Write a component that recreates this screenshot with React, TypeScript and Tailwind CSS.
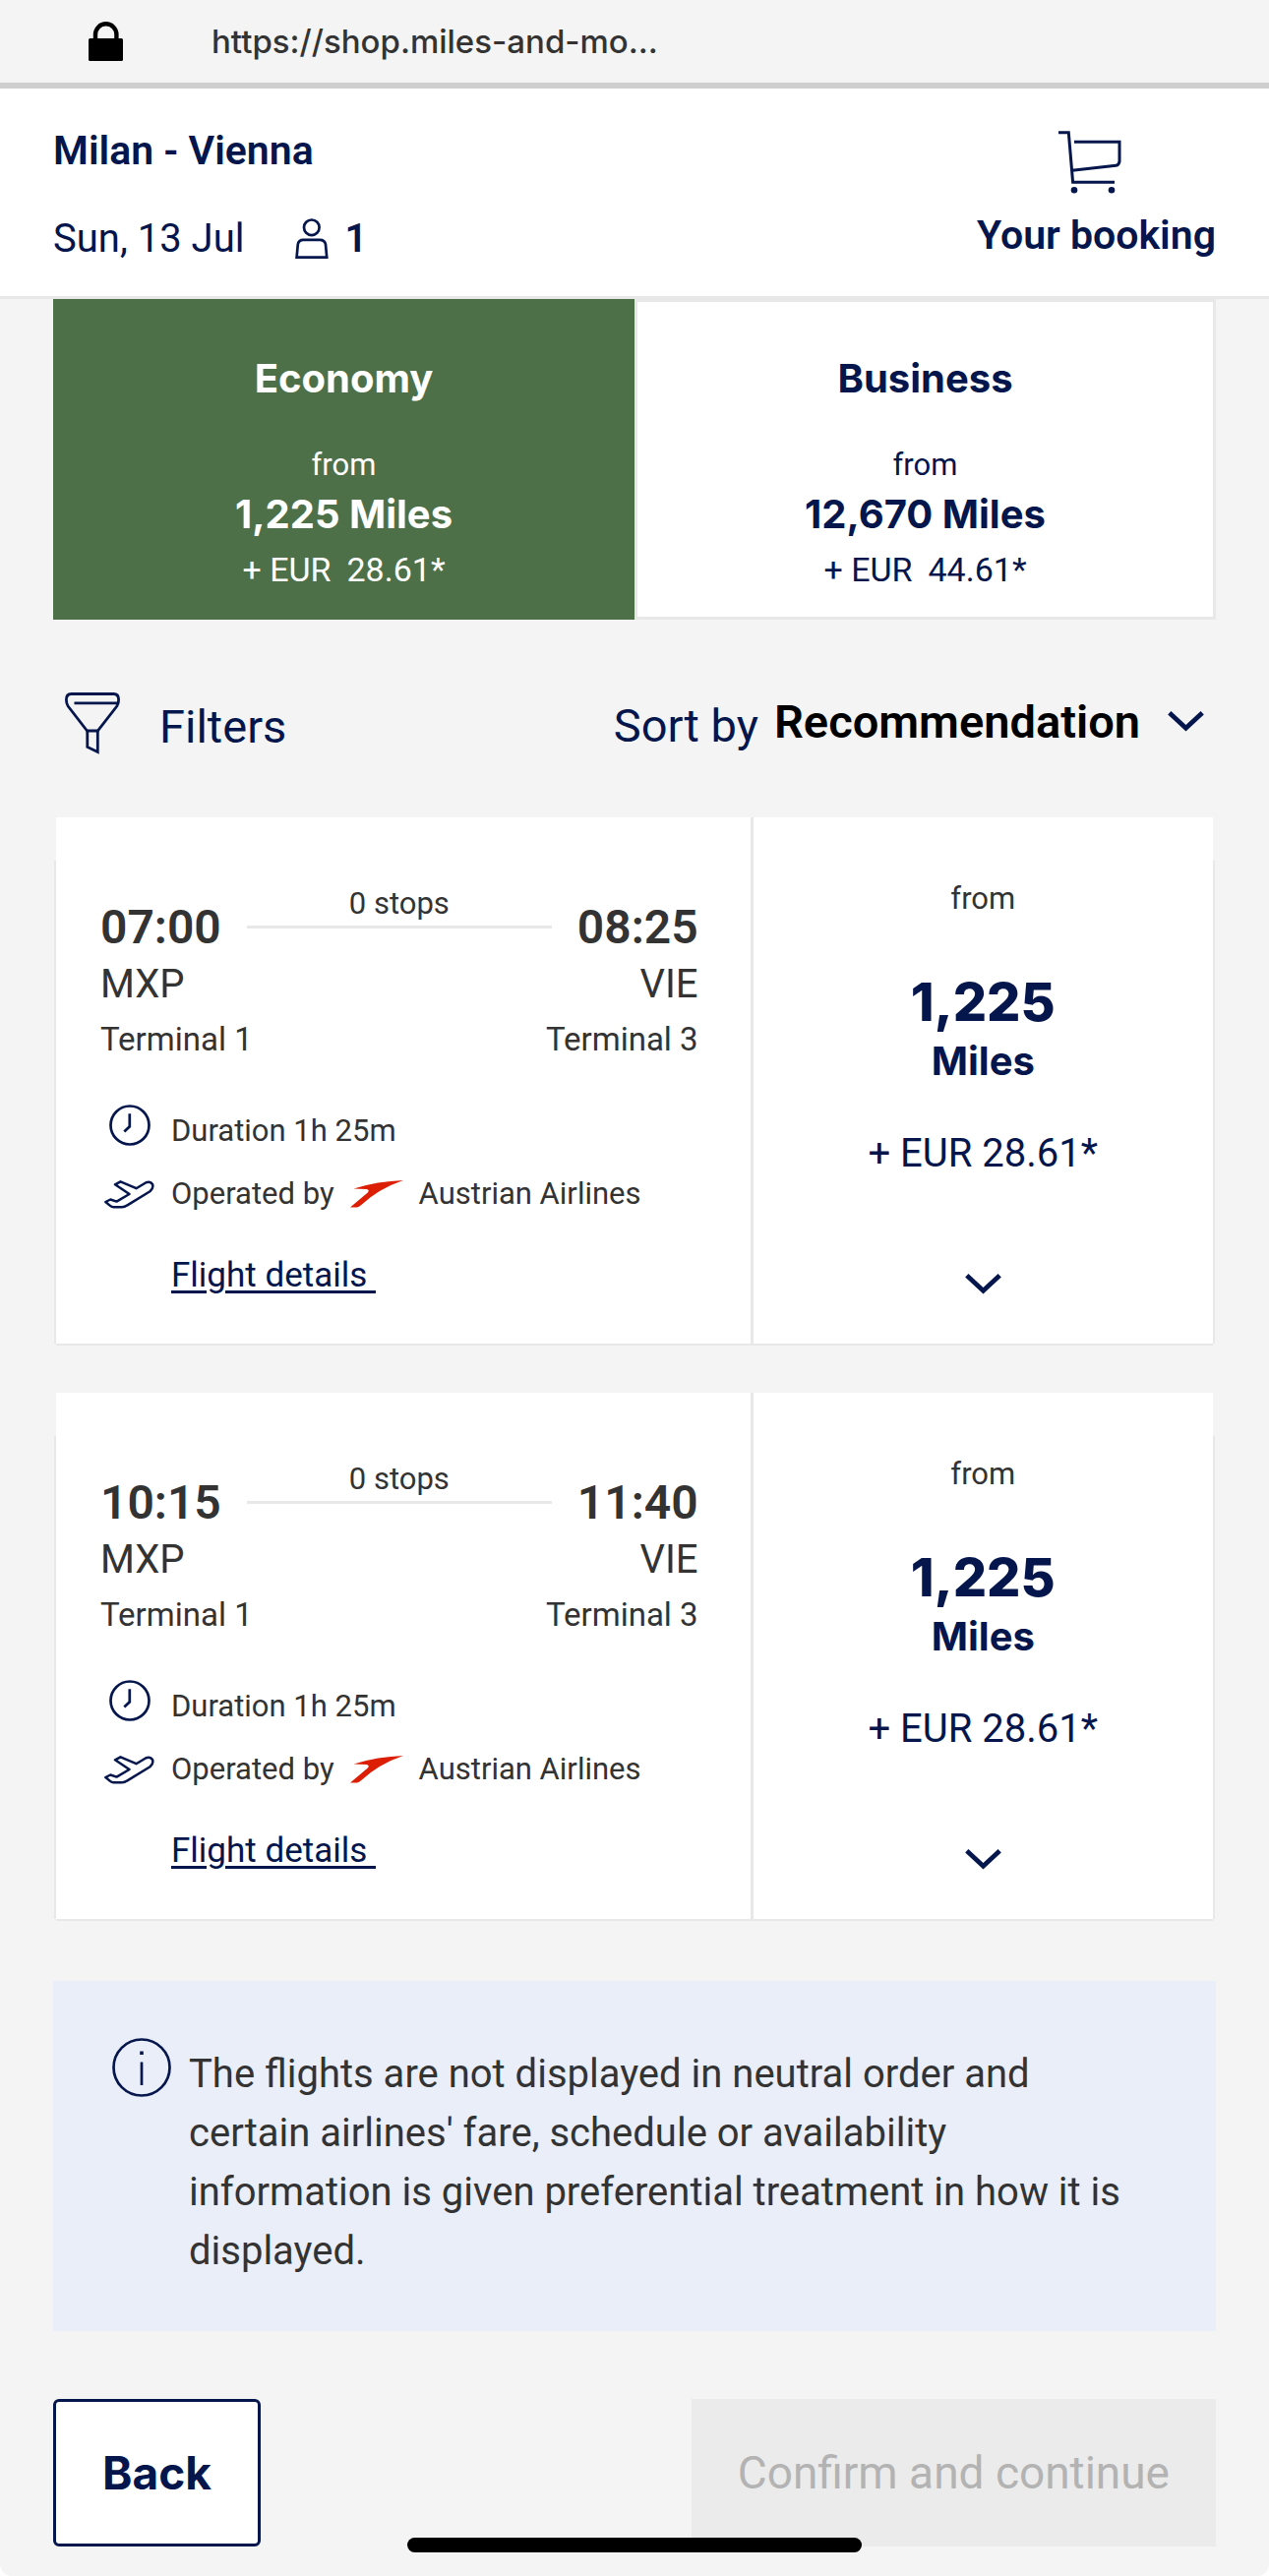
import React from "react";

type Flight = {
  id: string;
  depart: string;
  arrive: string;
};

const flights: Flight[] = [
  { id: "first", depart: "07:00", arrive: "08:25" },
  { id: "second", depart: "10:15", arrive: "11:40" },
];

function LockIcon() {
  return (
    <svg width="35" height="40" viewBox="0 0 35 40" aria-hidden="true">
      <rect x="0" y="17" width="35" height="23" rx="1.5" fill="#000" />
      <path d="M7 19V13a10.7 10.7 0 0 1 21.4 0v6" fill="none" stroke="#000" strokeWidth="4.4" />
    </svg>
  );
}

function PersonIcon() {
  return (
    <svg width="34" height="42" viewBox="0 0 34 42" fill="none" stroke="currentColor" strokeWidth="2.7" aria-hidden="true">
      <circle cx="16.8" cy="9.3" r="7.8" />
      <path d="M1.6 39.6 2.8 26.5Q3.5 21.8 8.5 21.8H25Q30.2 21.8 31 26.5L32.2 39.6Z" />
    </svg>
  );
}

function CartIcon() {
  return (
    <svg width="80" height="64" viewBox="0 0 80 64" fill="none" stroke="currentColor" strokeWidth="3" aria-hidden="true">
      <path d="M1 1.8H11.3L15.6 52.2H58" />
      <path d="M17 11.3H63V31Q62.6 34.8 59.5 35.2L15 40.3" />
      <circle cx="17" cy="60.3" r="3.3" fill="currentColor" stroke="none" />
      <circle cx="55" cy="60.3" r="3.3" fill="currentColor" stroke="none" />
    </svg>
  );
}

function FunnelIcon() {
  return (
    <svg width="56" height="63" viewBox="0 0 56 63" fill="none" stroke="currentColor" strokeWidth="2.8" aria-hidden="true">
      <path d="M22.5 39 3.2 14Q1.4 11.2 1.4 7.5Q1.4 1.5 6.5 1.5H49.5Q54.6 1.5 54.6 7.5Q54.6 11.2 52.8 14L33.3 39Z" />
      <path d="M9.5 10.8H53.5" />
      <path d="M22.8 39V55.4L33.3 60.5V39" />
    </svg>
  );
}

function ClockIcon() {
  return (
    <svg width="42" height="42" viewBox="0 0 42 42" fill="none" stroke="currentColor" strokeWidth="2.7" aria-hidden="true">
      <circle cx="21" cy="21" r="19.5" />
      <path d="M20.8 9.3V22.3L15.3 27.4" />
    </svg>
  );
}

function PlaneIcon() {
  return (
    <svg width="51" height="29" viewBox="0 0 51 29" fill="none" stroke="currentColor" strokeWidth="2.5" strokeLinejoin="round" aria-hidden="true">
      <path d="M11 4.3 16.5 1.3 32.5 8.2 42.5 2.2Q47 .6 49 4Q50.4 8 46.5 11.3L23 25.6Q20.8 27.2 18 27.2H9.5Q7.6 27.2 6 25.9L1.3 22 6.3 19.5 12.5 21.6 25.5 14Z" />
    </svg>
  );
}

function AustrianMark() {
  return (
    <svg width="54" height="28" viewBox="0 0 54 28" aria-hidden="true">
      <path d="M54 0Q28 1 3.5 8.4L16.5 9Q20.2 9.6 17.8 12.4L0 27.6H6.8Q9 27.2 11 25.2Q29 8.5 54 0Z" fill="#dc1e05" />
    </svg>
  );
}

function ChevronIcon() {
  return (
    <svg width="37" height="21" viewBox="0 0 37 21" fill="none" stroke="currentColor" strokeWidth="4.8" aria-hidden="true">
      <path d="M1.8 1.8 18.5 17.2 35.2 1.8" />
    </svg>
  );
}

function InfoIcon() {
  return (
    <svg className="shrink-0" width="60" height="60" viewBox="0 0 60 60" fill="none" stroke="currentColor" strokeWidth="2.7" aria-hidden="true">
      <circle cx="30" cy="30" r="28.5" />
      <path d="M30 24.5V48" />
      <path d="M30 13.5V17" strokeWidth="3.6" />
    </svg>
  );
}

function CabinTab({ name, miles, fee, selected }: { name: string; miles: string; fee: string; selected: boolean }) {
  return (
    <button
      type="button"
      role="tab"
      aria-selected={selected}
      className={
        selected
          ? "flex flex-col items-center border-[3px] border-[#4d7049] bg-[#4d7049] pt-[54px] pb-[28px] text-white"
          : "flex flex-col items-center border-[3px] border-[#e8e8e8] bg-white pt-[54px] pb-[28px] text-[#05164d]"
      }
    >
      <span className="font-[Inter,sans-serif] text-[40px] leading-[48px] font-bold">{name}</span>
      <span className="mt-11 text-[31px] leading-[40px]">from</span>
      <span className="mt-[6px] font-[Inter,sans-serif] text-[40px] leading-[48px] font-bold">{miles} Miles</span>
      <span className="mt-3 flex gap-4 text-[34px] leading-[40px]">
        <span>+ EUR</span>
        <span>{fee}</span>
      </span>
    </button>
  );
}

function FlightCard({ depart, arrive }: Flight) {
  return (
    <article className="relative mx-[3px] grid grid-cols-[3fr_2fr] border-b-2 border-[#e8e8e8] bg-white before:absolute before:top-11 before:bottom-0 before:-left-[2px] before:w-[2px] before:bg-[#e8e8e8] after:absolute after:top-11 after:-right-[2px] after:bottom-0 after:w-[2px] after:bg-[#e8e8e8]">
      <div className="pt-[70px] pr-[53px] pb-[49px] pl-[45px] text-[#333]">
        <div className="flex items-start text-[48px] leading-[56px] font-semibold">
          <time className="mt-[14px]">{depart}</time>
          <div className="mx-[26px] flex-1 border-b-[3px] border-[#e8e8e8] pb-1 text-center text-[31px] leading-[36px] font-normal">
            0 stops
          </div>
          <time className="mt-[14px]">{arrive}</time>
        </div>
        <div className="mt-[6px] flex justify-between text-[40px] leading-[48px]">
          <span>MXP</span>
          <span>VIE</span>
        </div>
        <div className="mt-3 flex justify-between text-[33px] leading-[40px]">
          <span>Terminal 1</span>
          <span>Terminal 3</span>
        </div>
        <div className="mt-[46px] grid grid-cols-[72px_1fr] text-[31px] leading-[40px]">
          <span className="pl-[9px] text-[#05164d]">
            <ClockIcon />
          </span>
          <span className="pt-[7px]">Duration 1h 25m</span>
        </div>
        <div className="mt-6 grid grid-cols-[72px_1fr] text-[31px] leading-[40px]">
          <span className="flex items-center pl-1 text-[#05164d]">
            <PlaneIcon />
          </span>
          <span className="flex items-center">
            Operated by
            <span className="mr-4 ml-4">
              <AustrianMark />
            </span>
            Austrian Airlines
          </span>
        </div>
        <a
          href="#flight-details"
          className="mt-[43px] ml-[72px] inline-block text-[35px] leading-[40px] text-[#05164d] underline decoration-[3px] underline-offset-[4px]"
        >
          Flight details&nbsp;
        </a>
      </div>
      <button
        type="button"
        aria-label={"Show fares for the " + depart + " flight"}
        className="flex flex-col items-center border-l-[3px] border-[#e8e8e8] pt-[63px] text-[#05164d]"
      >
        <span className="text-[31px] leading-[40px] text-[#333]">from</span>
        <span className="mt-[53px] font-[Inter,sans-serif] text-[54px] leading-[64px] font-extrabold">1,225</span>
        <span className="mt-1 font-[Inter,sans-serif] text-[40px] leading-[48px] font-bold">Miles</span>
        <span className="mt-[46px] text-[40px] leading-[48px]">+ EUR 28.61*</span>
        <span className="mt-[98px]">
          <ChevronIcon />
        </span>
      </button>
    </article>
  );
}

export default function App() {
  return (
    <div className="relative rounded-b-xl bg-[#f4f4f4] pb-[30px] font-[Roboto,sans-serif] text-[#05164d]">
      <div className="flex items-center gap-[90px] border-b-[6px] border-[#cecece] py-[22px] pl-[90px]">
        <LockIcon />
        <span className="font-[Inter,sans-serif] text-[33px] leading-[40px] font-medium text-[#333]">
          https://shop.miles-and-mo...
        </span>
      </div>

      <header className="flex items-center justify-between border-b-[3px] border-[#e8e8e8] bg-white px-[54px] pt-[39px] pb-[34px]">
        <div>
          <h1 className="text-[41px] leading-[48px] font-semibold">Milan - Vienna</h1>
          <div className="mt-[42px] flex items-center text-[40px] leading-[48px]">
            <span>Sun, 13 Jul</span>
            <span className="mr-4 ml-[52px]">
              <PersonIcon />
            </span>
            <span className="font-semibold">1</span>
          </div>
        </div>
        <a href="#booking" className="flex flex-col items-center gap-[18px]">
          <CartIcon />
          <span className="text-[41px] leading-[48px] font-semibold">Your booking</span>
        </a>
      </header>

      <main className="px-[54px]">
        <div role="tablist" aria-label="Cabin class" className="grid grid-cols-2">
          <CabinTab name="Economy" miles="1,225" fee="28.61*" selected />
          <CabinTab name="Business" miles="12,670" fee="44.61*" selected={false} />
        </div>

        <div className="mt-[74px] flex items-center justify-between px-3 text-[47px] leading-[56px]">
          <button type="button" className="flex items-end gap-[40px]">
            <FunnelIcon />
            Filters
          </button>
          <div className="flex items-center">
            <label htmlFor="sort" className="pt-1">
              Sort by
            </label>
            <div className="relative ml-4 flex items-center pb-1">
              <select id="sort" defaultValue="recommendation" className="appearance-none bg-transparent pr-[64px] font-semibold text-black">
                <option value="recommendation">Recommendation</option>
              </select>
              <span className="pointer-events-none absolute right-0">
                <ChevronIcon />
              </span>
            </div>
          </div>
        </div>

        <div className="mt-[64px] flex flex-col gap-12">
          {flights.map((flight) => (
            <FlightCard key={flight.id} {...flight} />
          ))}
        </div>

        <div role="note" className="mt-[61px] flex items-start gap-[18px] bg-[#eaeef9] pt-[58px] pr-[76px] pb-[51px] pl-[60px]">
          <InfoIcon />
          <p className="pt-[7px] text-[40px] leading-[60px] text-[#333]">
            The flights are not displayed in neutral order and certain airlines' fare, schedule or availability
            information is given preferential treatment in how it is displayed.
          </p>
        </div>

        <div className="mt-[69px] flex justify-between text-[46px] leading-[56px]">
          <button type="button" className="rounded-md border-[3px] border-[#05164d] bg-white px-[47px] py-[44px] font-[Inter,sans-serif] font-bold">
            Back
          </button>
          <button type="button" disabled className="bg-[#ebebeb] px-[47px] text-[#b3b3b3]">
            Confirm and continue
          </button>
        </div>
      </main>

      <div className="absolute bottom-6 left-1/2 h-[15px] w-[462px] -translate-x-1/2 rounded-full bg-black" />
    </div>
  );
}
